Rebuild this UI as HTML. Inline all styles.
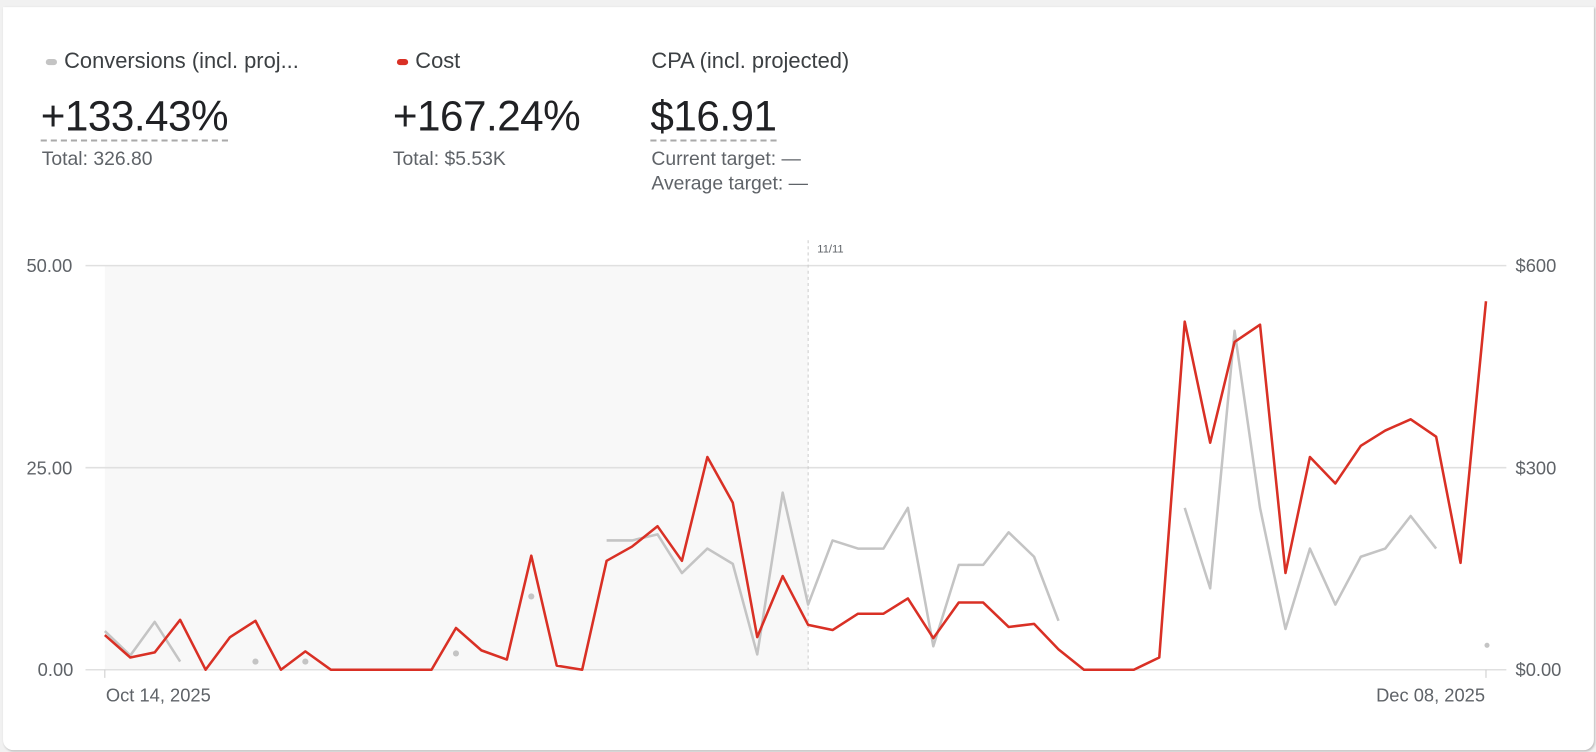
<!DOCTYPE html>
<html><head><meta charset="utf-8"><style>
body{margin:0;width:1596px;height:752px;background:#f1f1f1;font-family:"Liberation Sans",Roboto,sans-serif;overflow:hidden;position:relative}
#w{position:absolute;left:0;top:0;width:1568px;height:739px;transform:scale(1.0178);transform-origin:0 0}
.card{position:absolute;left:3px;top:7px;width:1563px;height:730px;background:#fff;border-radius:0 0 10px 10px;box-shadow:1px 1px 2px #bbb}
.t{position:absolute;color:#3c4043;white-space:nowrap}
.lbl{font-size:21.5px;top:48px}
.big{font-size:41.5px;color:#202124;top:90px;letter-spacing:-0.5px}
.big span{border-bottom:2px dashed #aaa;padding-bottom:0px}
.sm{font-size:19px;color:#5f6368}
.dot{display:inline-block;width:11px;height:6px;border-radius:3px;margin-right:7px;vertical-align:middle}
.ax{font-size:18px;color:#5f6368;position:absolute}
</style></head><body>
<div id="w">
<div class="card"></div>
<div class="t lbl" style="left:45px"><span class="dot" style="background:#c4c4c4"></span>Conversions (incl. proj...</div>
<div class="t lbl" style="left:390px"><span class="dot" style="background:#d93025"></span>Cost</div>
<div class="t lbl" style="left:640px">CPA (incl. projected)</div>
<div class="t big" style="left:40px"><span>+133.43%</span></div>
<div class="t big" style="left:386px">+167.24%</div>
<div class="t big" style="left:639px"><span>$16.91</span></div>
<div class="t sm" style="left:41px;top:146px">Total: 326.80</div>
<div class="t sm" style="left:386px;top:146px">Total: $5.53K</div>
<div class="t sm" style="left:640px;top:146px">Current target: —</div>
<div class="t sm" style="left:640px;top:170px">Average target: —</div>
<div class="ax" style="left:26px;top:251px">50.00</div>
<div class="ax" style="left:26px;top:450px">25.00</div>
<div class="ax" style="left:37px;top:648px">0.00</div>
<div class="ax" style="left:1489px;top:251px">$600</div>
<div class="ax" style="left:1489px;top:450px">$300</div>
<div class="ax" style="left:1489px;top:648px">$0.00</div>
<div class="ax" style="left:104px;top:673px">Oct 14, 2025</div>
<div class="ax" style="left:1352px;top:673px">Dec 08, 2025</div>
<div class="ax" style="left:803px;top:239px;font-size:11px">11/11</div>
<svg width="1568" height="739" style="position:absolute;left:0;top:0">
<rect x="103" y="261" width="691" height="397" fill="#f8f8f8"/>
<g stroke="#e0e0e0" stroke-width="1.5"><line x1="84" y1="261" x2="1480" y2="261"/><line x1="84" y1="459.5" x2="1480" y2="459.5"/><line x1="84" y1="658" x2="1480" y2="658"/></g>
<line x1="794" y1="236" x2="794" y2="658" stroke="#ccc" stroke-dasharray="3,3"/>
<line x1="103" y1="658" x2="103" y2="666" stroke="#ccc"/><line x1="1460" y1="658" x2="1460" y2="666" stroke="#ccc"/>
<g fill="none" stroke="#c4c4c4" stroke-width="2.5" stroke-linejoin="round">
<polyline points="103,620 128,644 152,611 177,650"/>
<polyline points="596,531 621,531 646,525 670,563 695,539 720,554 744,643 769,484 794,594 818,531 843,539 868,539 892,499 917,635 942,555 966,555 991,523 1016,547 1040,610"/>
<polyline points="1164,499 1189,578 1213,325 1238,499 1263,618 1287,539 1312,594 1337,547 1361,539 1386,507 1411,539"/>
</g>
<g fill="#c4c4c4"><circle cx="251" cy="650" r="3"/><circle cx="300" cy="650" r="3"/><circle cx="448" cy="642" r="3"/><circle cx="522" cy="586" r="3"/><circle cx="1461" cy="634" r="2.5"/></g>
<polyline fill="none" stroke="#d93025" stroke-width="2.5" stroke-linejoin="round" points="103,624 128,646 152,641 177,609 202,658 226,626 251,610 276,658 300,640 325,658 350,658 374,658 399,658 424,658 448,617 473,639 498,648 522,546 547,654 572,658 596,551 621,537 646,517 670,551 695,449 720,494 744,626 769,566 794,614 818,619 843,603 868,603 892,588 917,627 942,592 966,592 991,616 1016,613 1040,638 1065,658 1090,658 1114,658 1139,646 1164,316 1189,435 1213,336 1238,319 1263,563 1287,449 1312,475 1337,438 1361,423 1386,412 1411,429 1435,553 1460,296"/>
</svg>
</div>
</body></html>
